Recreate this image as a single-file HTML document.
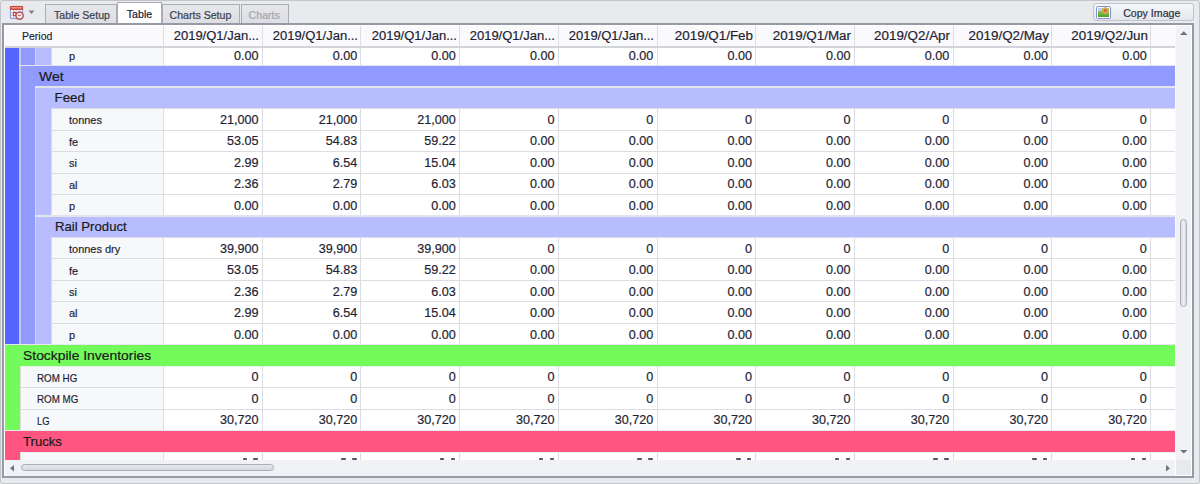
<!DOCTYPE html><html><head><meta charset="utf-8"><style>
*{box-sizing:border-box}
html,body{margin:0;padding:0;width:1200px;height:484px;overflow:hidden;background:#e9eaee;font-family:"Liberation Sans", sans-serif;position:relative}
.a{position:absolute}
.t{position:absolute;white-space:nowrap;line-height:normal;-webkit-text-stroke:0.20px currentColor}
</style></head><body>
<div class="a" style="left:0;top:0;width:1200px;height:484px;border:1px solid #c3c5cb;border-radius:3px"></div>
<svg class="a" style="left:9px;top:5px" width="17" height="17" viewBox="0 0 17 17">
<rect x="1.4" y="1.4" width="12.2" height="12.2" rx="0.8" fill="#fff" stroke="#7f95d6" stroke-width="1"/>
<rect x="0.9" y="0.9" width="13.2" height="4" rx="0.8" fill="#c8483e"/>
<rect x="1.9" y="2.1" width="11.2" height="1.4" fill="#f09a88"/>
<path d="M2 7.5h11M2 10h11M2 12.5h11M4.6 5v8M7.3 5v8M10 5v8" stroke="#9fb0e6" stroke-width="0.9" stroke-dasharray="1.1 1.1"/>
<path d="M4.3 7.4h2.6v3.4h-2.6z" fill="none" stroke="#e02828" stroke-width="1.1"/>
<circle cx="10.6" cy="10.6" r="3.6" fill="#eef4fa" stroke="#b84e4c" stroke-width="1.4"/>
<path d="M9 10.3l2 0.6 1-1.2" stroke="#c03838" stroke-width="0.9" fill="none"/>
</svg>
<svg class="a" style="left:28px;top:10px" width="8" height="5" viewBox="0 0 8 5"><path d="M0.5 0.5h6l-3 3.5z" fill="#7a7e88"/></svg>
<div class="a" style="left:45.0px;top:4.2px;width:72.2px;height:19.8px;background:linear-gradient(#e6e7eb,#dcdee3);border:1px solid #a9acb4;border-bottom:none"></div>
<div class="t" style="left:54.00px;top:8.81px;font-size:10.60px;color:#3a3e4c;transform:scaleX(1.000);transform-origin:0 0;">Table Setup</div>
<div class="a" style="left:161.6px;top:4.2px;width:78.9px;height:19.8px;background:linear-gradient(#e6e7eb,#dcdee3);border:1px solid #a9acb4;border-bottom:none"></div>
<div class="t" style="left:169.50px;top:8.81px;font-size:10.60px;color:#3a3e4c;transform:scaleX(1.000);transform-origin:0 0;">Charts Setup</div>
<div class="a" style="left:240.5px;top:4.2px;width:48.0px;height:19.8px;background:linear-gradient(#e6e7eb,#dcdee3);border:1px solid #a9acb4;border-bottom:none"></div>
<div class="t" style="left:248.60px;top:8.81px;font-size:10.60px;color:#a2a5b0;transform:scaleX(1.000);transform-origin:0 0;">Charts</div>
<div class="a" style="left:117.2px;top:2.2px;width:44.8px;height:21.8px;background:#ffffff;border:1px solid #a9acb4;border-bottom:none"></div>
<div class="t" style="left:126.80px;top:7.81px;font-size:10.60px;color:#1a1a3a;transform:scaleX(1.000);transform-origin:0 0;">Table</div>
<div class="a" style="left:1092.5px;top:3px;width:101px;height:18px;border:1px solid #c1c4cb;border-radius:3px;background:linear-gradient(#f6f7f9,#e4e6eb)"></div>
<svg class="a" style="left:1096px;top:6px" width="15" height="13" viewBox="0 0 15 13">
<defs><linearGradient id="gg" x1="0" y1="0" x2="0" y2="1"><stop offset="0" stop-color="#b6e070"/><stop offset="1" stop-color="#4c9e22"/></linearGradient></defs>
<rect x="0.5" y="0.5" width="14" height="12" rx="1.2" fill="#fff" stroke="#7d90d4" stroke-width="1"/>
<rect x="2" y="2" width="11" height="9" fill="url(#gg)"/>
<rect x="2" y="2" width="4" height="2.8" fill="#a8d8f2"/>
<circle cx="9.3" cy="4.6" r="3.4" fill="#e2a45a"/>
<circle cx="9.3" cy="4.6" r="1.5" fill="#c46e2e"/>
</svg>
<div class="t" style="left:1123.20px;top:7.31px;font-size:10.60px;color:#2a2e3c;transform:scaleX(1.000);transform-origin:0 0;">Copy Image</div>
<div class="a" style="left:2px;top:23px;width:1192px;height:455px;border:2px solid #959aa4;background:#fff"></div>
<div class="a" style="left:5.00px;top:26.00px;width:1169.80px;height:20.00px;background:#fafafc;"></div>
<div class="a" style="left:5.00px;top:46.00px;width:1169.80px;height:1.60px;background:#d3d4da;"></div>
<div class="t" style="left:21.80px;top:29.22px;font-size:11.80px;color:#1f1f33;transform:scaleX(0.890);transform-origin:0 0;">Period</div>
<div class="t" style="left:59.29px;top:28.99px;width:200px;text-align:right;font-size:12.50px;color:#1f1f33;transform:scaleX(1.040);transform-origin:100% 0;">2019/Q1/Jan...</div>
<div class="t" style="left:157.98px;top:28.99px;width:200px;text-align:right;font-size:12.50px;color:#1f1f33;transform:scaleX(1.040);transform-origin:100% 0;">2019/Q1/Jan...</div>
<div class="t" style="left:256.67px;top:28.99px;width:200px;text-align:right;font-size:12.50px;color:#1f1f33;transform:scaleX(1.040);transform-origin:100% 0;">2019/Q1/Jan...</div>
<div class="t" style="left:355.36px;top:28.99px;width:200px;text-align:right;font-size:12.50px;color:#1f1f33;transform:scaleX(1.040);transform-origin:100% 0;">2019/Q1/Jan...</div>
<div class="t" style="left:454.05px;top:28.99px;width:200px;text-align:right;font-size:12.50px;color:#1f1f33;transform:scaleX(1.040);transform-origin:100% 0;">2019/Q1/Jan...</div>
<div class="t" style="left:552.74px;top:28.99px;width:200px;text-align:right;font-size:12.50px;color:#1f1f33;transform:scaleX(1.071);transform-origin:100% 0;">2019/Q1/Feb</div>
<div class="t" style="left:651.43px;top:28.99px;width:200px;text-align:right;font-size:12.50px;color:#1f1f33;transform:scaleX(1.071);transform-origin:100% 0;">2019/Q1/Mar</div>
<div class="t" style="left:750.12px;top:28.99px;width:200px;text-align:right;font-size:12.50px;color:#1f1f33;transform:scaleX(1.071);transform-origin:100% 0;">2019/Q2/Apr</div>
<div class="t" style="left:848.81px;top:28.99px;width:200px;text-align:right;font-size:12.50px;color:#1f1f33;transform:scaleX(1.071);transform-origin:100% 0;">2019/Q2/May</div>
<div class="t" style="left:947.50px;top:28.99px;width:200px;text-align:right;font-size:12.50px;color:#1f1f33;transform:scaleX(1.071);transform-origin:100% 0;">2019/Q2/Jun</div>
<div class="a" style="left:163.10px;top:26.00px;width:1.00px;height:20.50px;background:#dcdde2;"></div>
<div class="a" style="left:261.79px;top:26.00px;width:1.00px;height:20.50px;background:#dcdde2;"></div>
<div class="a" style="left:360.48px;top:26.00px;width:1.00px;height:20.50px;background:#dcdde2;"></div>
<div class="a" style="left:459.17px;top:26.00px;width:1.00px;height:20.50px;background:#dcdde2;"></div>
<div class="a" style="left:557.86px;top:26.00px;width:1.00px;height:20.50px;background:#dcdde2;"></div>
<div class="a" style="left:656.55px;top:26.00px;width:1.00px;height:20.50px;background:#dcdde2;"></div>
<div class="a" style="left:755.24px;top:26.00px;width:1.00px;height:20.50px;background:#dcdde2;"></div>
<div class="a" style="left:853.93px;top:26.00px;width:1.00px;height:20.50px;background:#dcdde2;"></div>
<div class="a" style="left:952.62px;top:26.00px;width:1.00px;height:20.50px;background:#dcdde2;"></div>
<div class="a" style="left:1051.31px;top:26.00px;width:1.00px;height:20.50px;background:#dcdde2;"></div>
<div class="a" style="left:1150.00px;top:26.00px;width:1.00px;height:20.50px;background:#dcdde2;"></div>
<div class="a" style="left:0;top:47.6px;width:1174.8px;height:412px;overflow:hidden"><div class="a" style="left:0;top:-47.6px;width:1200px;height:484px">
<div class="a" style="left:5.00px;top:44.84px;width:14.20px;height:21.46px;background:#5566ff;"></div>
<div class="a" style="left:19.20px;top:44.84px;width:1.60px;height:21.46px;background:#c4c7ee;"></div>
<div class="a" style="left:20.80px;top:44.84px;width:14.20px;height:21.46px;background:#919bff;"></div>
<div class="a" style="left:35.00px;top:44.84px;width:1.00px;height:21.46px;background:#d0d3e2;"></div>
<div class="a" style="left:36.00px;top:44.84px;width:14.60px;height:21.46px;background:#b8bdff;"></div>
<div class="a" style="left:50.60px;top:44.84px;width:1.20px;height:21.46px;background:#dcdcde;"></div>
<div class="a" style="left:51.80px;top:44.84px;width:111.20px;height:21.46px;background:#f7f8fa;"></div>
<div class="a" style="left:50.60px;top:65.30px;width:1124.20px;height:1.00px;background:#dcdde2;"></div>
<div class="a" style="left:163.10px;top:44.84px;width:1.00px;height:21.46px;background:#dcdde2;"></div>
<div class="a" style="left:261.79px;top:44.84px;width:1.00px;height:21.46px;background:#dcdde2;"></div>
<div class="a" style="left:360.48px;top:44.84px;width:1.00px;height:21.46px;background:#dcdde2;"></div>
<div class="a" style="left:459.17px;top:44.84px;width:1.00px;height:21.46px;background:#dcdde2;"></div>
<div class="a" style="left:557.86px;top:44.84px;width:1.00px;height:21.46px;background:#dcdde2;"></div>
<div class="a" style="left:656.55px;top:44.84px;width:1.00px;height:21.46px;background:#dcdde2;"></div>
<div class="a" style="left:755.24px;top:44.84px;width:1.00px;height:21.46px;background:#dcdde2;"></div>
<div class="a" style="left:853.93px;top:44.84px;width:1.00px;height:21.46px;background:#dcdde2;"></div>
<div class="a" style="left:952.62px;top:44.84px;width:1.00px;height:21.46px;background:#dcdde2;"></div>
<div class="a" style="left:1051.31px;top:44.84px;width:1.00px;height:21.46px;background:#dcdde2;"></div>
<div class="a" style="left:1150.00px;top:44.84px;width:1.00px;height:21.46px;background:#dcdde2;"></div>
<div class="t" style="left:69.10px;top:48.96px;font-size:11.80px;color:#1f1f33;transform:scaleX(0.930);transform-origin:0 0;">p</div>
<div class="t" style="left:58.49px;top:48.54px;width:200px;text-align:right;font-size:12.60px;color:#1f1f33;transform:scaleX(1.000);transform-origin:100% 0;">0.00</div>
<div class="t" style="left:157.18px;top:48.54px;width:200px;text-align:right;font-size:12.60px;color:#1f1f33;transform:scaleX(1.000);transform-origin:100% 0;">0.00</div>
<div class="t" style="left:255.87px;top:48.54px;width:200px;text-align:right;font-size:12.60px;color:#1f1f33;transform:scaleX(1.000);transform-origin:100% 0;">0.00</div>
<div class="t" style="left:354.56px;top:48.54px;width:200px;text-align:right;font-size:12.60px;color:#1f1f33;transform:scaleX(1.000);transform-origin:100% 0;">0.00</div>
<div class="t" style="left:453.25px;top:48.54px;width:200px;text-align:right;font-size:12.60px;color:#1f1f33;transform:scaleX(1.000);transform-origin:100% 0;">0.00</div>
<div class="t" style="left:551.94px;top:48.54px;width:200px;text-align:right;font-size:12.60px;color:#1f1f33;transform:scaleX(1.000);transform-origin:100% 0;">0.00</div>
<div class="t" style="left:650.63px;top:48.54px;width:200px;text-align:right;font-size:12.60px;color:#1f1f33;transform:scaleX(1.000);transform-origin:100% 0;">0.00</div>
<div class="t" style="left:749.32px;top:48.54px;width:200px;text-align:right;font-size:12.60px;color:#1f1f33;transform:scaleX(1.000);transform-origin:100% 0;">0.00</div>
<div class="t" style="left:848.01px;top:48.54px;width:200px;text-align:right;font-size:12.60px;color:#1f1f33;transform:scaleX(1.000);transform-origin:100% 0;">0.00</div>
<div class="t" style="left:946.70px;top:48.54px;width:200px;text-align:right;font-size:12.60px;color:#1f1f33;transform:scaleX(1.000);transform-origin:100% 0;">0.00</div>
<div class="a" style="left:5.00px;top:66.30px;width:14.20px;height:21.46px;background:#5566ff;"></div>
<div class="a" style="left:19.20px;top:66.30px;width:1.60px;height:21.46px;background:#c4c7ee;"></div>
<div class="a" style="left:20.80px;top:66.30px;width:1154.00px;height:21.46px;background:#919bff;"></div>
<div class="a" style="left:35.00px;top:86.66px;width:1139.80px;height:1.10px;background:#dcdde2;"></div>
<div class="a" style="left:19.20px;top:65.00px;width:1155.60px;height:1.30px;background:#e4e5ea;"></div>
<div class="t" style="left:39.30px;top:68.86px;font-size:13.30px;color:#1a1a1a;transform:scaleX(1.050);transform-origin:0 0;">Wet</div>
<div class="a" style="left:5.00px;top:87.76px;width:14.20px;height:21.46px;background:#5566ff;"></div>
<div class="a" style="left:19.20px;top:87.76px;width:1.60px;height:21.46px;background:#c4c7ee;"></div>
<div class="a" style="left:20.80px;top:87.76px;width:14.20px;height:21.46px;background:#919bff;"></div>
<div class="a" style="left:35.00px;top:87.76px;width:1.00px;height:21.46px;background:#d0d3e2;"></div>
<div class="a" style="left:36.00px;top:87.76px;width:1138.80px;height:21.46px;background:#b8bdff;"></div>
<div class="a" style="left:50.60px;top:108.12px;width:1124.20px;height:1.10px;background:#dcdde4;"></div>
<div class="a" style="left:35.00px;top:86.46px;width:1139.80px;height:1.30px;background:#e4e5ea;"></div>
<div class="t" style="left:54.60px;top:90.32px;font-size:13.30px;color:#1a1a1a;transform:scaleX(1.000);transform-origin:0 0;">Feed</div>
<div class="a" style="left:5.00px;top:109.22px;width:14.20px;height:21.46px;background:#5566ff;"></div>
<div class="a" style="left:19.20px;top:109.22px;width:1.60px;height:21.46px;background:#c4c7ee;"></div>
<div class="a" style="left:20.80px;top:109.22px;width:14.20px;height:21.46px;background:#919bff;"></div>
<div class="a" style="left:35.00px;top:109.22px;width:1.00px;height:21.46px;background:#d0d3e2;"></div>
<div class="a" style="left:36.00px;top:109.22px;width:14.60px;height:21.46px;background:#b8bdff;"></div>
<div class="a" style="left:50.60px;top:109.22px;width:1.20px;height:21.46px;background:#dcdcde;"></div>
<div class="a" style="left:51.80px;top:109.22px;width:111.20px;height:21.46px;background:#f7f8fa;"></div>
<div class="a" style="left:50.60px;top:129.68px;width:1124.20px;height:1.00px;background:#dcdde2;"></div>
<div class="a" style="left:163.10px;top:109.22px;width:1.00px;height:21.46px;background:#dcdde2;"></div>
<div class="a" style="left:261.79px;top:109.22px;width:1.00px;height:21.46px;background:#dcdde2;"></div>
<div class="a" style="left:360.48px;top:109.22px;width:1.00px;height:21.46px;background:#dcdde2;"></div>
<div class="a" style="left:459.17px;top:109.22px;width:1.00px;height:21.46px;background:#dcdde2;"></div>
<div class="a" style="left:557.86px;top:109.22px;width:1.00px;height:21.46px;background:#dcdde2;"></div>
<div class="a" style="left:656.55px;top:109.22px;width:1.00px;height:21.46px;background:#dcdde2;"></div>
<div class="a" style="left:755.24px;top:109.22px;width:1.00px;height:21.46px;background:#dcdde2;"></div>
<div class="a" style="left:853.93px;top:109.22px;width:1.00px;height:21.46px;background:#dcdde2;"></div>
<div class="a" style="left:952.62px;top:109.22px;width:1.00px;height:21.46px;background:#dcdde2;"></div>
<div class="a" style="left:1051.31px;top:109.22px;width:1.00px;height:21.46px;background:#dcdde2;"></div>
<div class="a" style="left:1150.00px;top:109.22px;width:1.00px;height:21.46px;background:#dcdde2;"></div>
<div class="t" style="left:69.10px;top:113.34px;font-size:11.80px;color:#1f1f33;transform:scaleX(0.930);transform-origin:0 0;">tonnes</div>
<div class="t" style="left:58.49px;top:112.92px;width:200px;text-align:right;font-size:12.60px;color:#1f1f33;transform:scaleX(1.000);transform-origin:100% 0;">21,000</div>
<div class="t" style="left:157.18px;top:112.92px;width:200px;text-align:right;font-size:12.60px;color:#1f1f33;transform:scaleX(1.000);transform-origin:100% 0;">21,000</div>
<div class="t" style="left:255.87px;top:112.92px;width:200px;text-align:right;font-size:12.60px;color:#1f1f33;transform:scaleX(1.000);transform-origin:100% 0;">21,000</div>
<div class="t" style="left:354.56px;top:112.92px;width:200px;text-align:right;font-size:12.60px;color:#1f1f33;transform:scaleX(1.000);transform-origin:100% 0;">0</div>
<div class="t" style="left:453.25px;top:112.92px;width:200px;text-align:right;font-size:12.60px;color:#1f1f33;transform:scaleX(1.000);transform-origin:100% 0;">0</div>
<div class="t" style="left:551.94px;top:112.92px;width:200px;text-align:right;font-size:12.60px;color:#1f1f33;transform:scaleX(1.000);transform-origin:100% 0;">0</div>
<div class="t" style="left:650.63px;top:112.92px;width:200px;text-align:right;font-size:12.60px;color:#1f1f33;transform:scaleX(1.000);transform-origin:100% 0;">0</div>
<div class="t" style="left:749.32px;top:112.92px;width:200px;text-align:right;font-size:12.60px;color:#1f1f33;transform:scaleX(1.000);transform-origin:100% 0;">0</div>
<div class="t" style="left:848.01px;top:112.92px;width:200px;text-align:right;font-size:12.60px;color:#1f1f33;transform:scaleX(1.000);transform-origin:100% 0;">0</div>
<div class="t" style="left:946.70px;top:112.92px;width:200px;text-align:right;font-size:12.60px;color:#1f1f33;transform:scaleX(1.000);transform-origin:100% 0;">0</div>
<div class="a" style="left:5.00px;top:130.68px;width:14.20px;height:21.46px;background:#5566ff;"></div>
<div class="a" style="left:19.20px;top:130.68px;width:1.60px;height:21.46px;background:#c4c7ee;"></div>
<div class="a" style="left:20.80px;top:130.68px;width:14.20px;height:21.46px;background:#919bff;"></div>
<div class="a" style="left:35.00px;top:130.68px;width:1.00px;height:21.46px;background:#d0d3e2;"></div>
<div class="a" style="left:36.00px;top:130.68px;width:14.60px;height:21.46px;background:#b8bdff;"></div>
<div class="a" style="left:50.60px;top:130.68px;width:1.20px;height:21.46px;background:#dcdcde;"></div>
<div class="a" style="left:51.80px;top:130.68px;width:111.20px;height:21.46px;background:#f7f8fa;"></div>
<div class="a" style="left:50.60px;top:151.14px;width:1124.20px;height:1.00px;background:#dcdde2;"></div>
<div class="a" style="left:163.10px;top:130.68px;width:1.00px;height:21.46px;background:#dcdde2;"></div>
<div class="a" style="left:261.79px;top:130.68px;width:1.00px;height:21.46px;background:#dcdde2;"></div>
<div class="a" style="left:360.48px;top:130.68px;width:1.00px;height:21.46px;background:#dcdde2;"></div>
<div class="a" style="left:459.17px;top:130.68px;width:1.00px;height:21.46px;background:#dcdde2;"></div>
<div class="a" style="left:557.86px;top:130.68px;width:1.00px;height:21.46px;background:#dcdde2;"></div>
<div class="a" style="left:656.55px;top:130.68px;width:1.00px;height:21.46px;background:#dcdde2;"></div>
<div class="a" style="left:755.24px;top:130.68px;width:1.00px;height:21.46px;background:#dcdde2;"></div>
<div class="a" style="left:853.93px;top:130.68px;width:1.00px;height:21.46px;background:#dcdde2;"></div>
<div class="a" style="left:952.62px;top:130.68px;width:1.00px;height:21.46px;background:#dcdde2;"></div>
<div class="a" style="left:1051.31px;top:130.68px;width:1.00px;height:21.46px;background:#dcdde2;"></div>
<div class="a" style="left:1150.00px;top:130.68px;width:1.00px;height:21.46px;background:#dcdde2;"></div>
<div class="t" style="left:69.10px;top:134.80px;font-size:11.80px;color:#1f1f33;transform:scaleX(0.930);transform-origin:0 0;">fe</div>
<div class="t" style="left:58.49px;top:134.38px;width:200px;text-align:right;font-size:12.60px;color:#1f1f33;transform:scaleX(1.000);transform-origin:100% 0;">53.05</div>
<div class="t" style="left:157.18px;top:134.38px;width:200px;text-align:right;font-size:12.60px;color:#1f1f33;transform:scaleX(1.000);transform-origin:100% 0;">54.83</div>
<div class="t" style="left:255.87px;top:134.38px;width:200px;text-align:right;font-size:12.60px;color:#1f1f33;transform:scaleX(1.000);transform-origin:100% 0;">59.22</div>
<div class="t" style="left:354.56px;top:134.38px;width:200px;text-align:right;font-size:12.60px;color:#1f1f33;transform:scaleX(1.000);transform-origin:100% 0;">0.00</div>
<div class="t" style="left:453.25px;top:134.38px;width:200px;text-align:right;font-size:12.60px;color:#1f1f33;transform:scaleX(1.000);transform-origin:100% 0;">0.00</div>
<div class="t" style="left:551.94px;top:134.38px;width:200px;text-align:right;font-size:12.60px;color:#1f1f33;transform:scaleX(1.000);transform-origin:100% 0;">0.00</div>
<div class="t" style="left:650.63px;top:134.38px;width:200px;text-align:right;font-size:12.60px;color:#1f1f33;transform:scaleX(1.000);transform-origin:100% 0;">0.00</div>
<div class="t" style="left:749.32px;top:134.38px;width:200px;text-align:right;font-size:12.60px;color:#1f1f33;transform:scaleX(1.000);transform-origin:100% 0;">0.00</div>
<div class="t" style="left:848.01px;top:134.38px;width:200px;text-align:right;font-size:12.60px;color:#1f1f33;transform:scaleX(1.000);transform-origin:100% 0;">0.00</div>
<div class="t" style="left:946.70px;top:134.38px;width:200px;text-align:right;font-size:12.60px;color:#1f1f33;transform:scaleX(1.000);transform-origin:100% 0;">0.00</div>
<div class="a" style="left:5.00px;top:152.14px;width:14.20px;height:21.46px;background:#5566ff;"></div>
<div class="a" style="left:19.20px;top:152.14px;width:1.60px;height:21.46px;background:#c4c7ee;"></div>
<div class="a" style="left:20.80px;top:152.14px;width:14.20px;height:21.46px;background:#919bff;"></div>
<div class="a" style="left:35.00px;top:152.14px;width:1.00px;height:21.46px;background:#d0d3e2;"></div>
<div class="a" style="left:36.00px;top:152.14px;width:14.60px;height:21.46px;background:#b8bdff;"></div>
<div class="a" style="left:50.60px;top:152.14px;width:1.20px;height:21.46px;background:#dcdcde;"></div>
<div class="a" style="left:51.80px;top:152.14px;width:111.20px;height:21.46px;background:#f7f8fa;"></div>
<div class="a" style="left:50.60px;top:172.60px;width:1124.20px;height:1.00px;background:#dcdde2;"></div>
<div class="a" style="left:163.10px;top:152.14px;width:1.00px;height:21.46px;background:#dcdde2;"></div>
<div class="a" style="left:261.79px;top:152.14px;width:1.00px;height:21.46px;background:#dcdde2;"></div>
<div class="a" style="left:360.48px;top:152.14px;width:1.00px;height:21.46px;background:#dcdde2;"></div>
<div class="a" style="left:459.17px;top:152.14px;width:1.00px;height:21.46px;background:#dcdde2;"></div>
<div class="a" style="left:557.86px;top:152.14px;width:1.00px;height:21.46px;background:#dcdde2;"></div>
<div class="a" style="left:656.55px;top:152.14px;width:1.00px;height:21.46px;background:#dcdde2;"></div>
<div class="a" style="left:755.24px;top:152.14px;width:1.00px;height:21.46px;background:#dcdde2;"></div>
<div class="a" style="left:853.93px;top:152.14px;width:1.00px;height:21.46px;background:#dcdde2;"></div>
<div class="a" style="left:952.62px;top:152.14px;width:1.00px;height:21.46px;background:#dcdde2;"></div>
<div class="a" style="left:1051.31px;top:152.14px;width:1.00px;height:21.46px;background:#dcdde2;"></div>
<div class="a" style="left:1150.00px;top:152.14px;width:1.00px;height:21.46px;background:#dcdde2;"></div>
<div class="t" style="left:69.10px;top:156.26px;font-size:11.80px;color:#1f1f33;transform:scaleX(0.930);transform-origin:0 0;">si</div>
<div class="t" style="left:58.49px;top:155.84px;width:200px;text-align:right;font-size:12.60px;color:#1f1f33;transform:scaleX(1.000);transform-origin:100% 0;">2.99</div>
<div class="t" style="left:157.18px;top:155.84px;width:200px;text-align:right;font-size:12.60px;color:#1f1f33;transform:scaleX(1.000);transform-origin:100% 0;">6.54</div>
<div class="t" style="left:255.87px;top:155.84px;width:200px;text-align:right;font-size:12.60px;color:#1f1f33;transform:scaleX(1.000);transform-origin:100% 0;">15.04</div>
<div class="t" style="left:354.56px;top:155.84px;width:200px;text-align:right;font-size:12.60px;color:#1f1f33;transform:scaleX(1.000);transform-origin:100% 0;">0.00</div>
<div class="t" style="left:453.25px;top:155.84px;width:200px;text-align:right;font-size:12.60px;color:#1f1f33;transform:scaleX(1.000);transform-origin:100% 0;">0.00</div>
<div class="t" style="left:551.94px;top:155.84px;width:200px;text-align:right;font-size:12.60px;color:#1f1f33;transform:scaleX(1.000);transform-origin:100% 0;">0.00</div>
<div class="t" style="left:650.63px;top:155.84px;width:200px;text-align:right;font-size:12.60px;color:#1f1f33;transform:scaleX(1.000);transform-origin:100% 0;">0.00</div>
<div class="t" style="left:749.32px;top:155.84px;width:200px;text-align:right;font-size:12.60px;color:#1f1f33;transform:scaleX(1.000);transform-origin:100% 0;">0.00</div>
<div class="t" style="left:848.01px;top:155.84px;width:200px;text-align:right;font-size:12.60px;color:#1f1f33;transform:scaleX(1.000);transform-origin:100% 0;">0.00</div>
<div class="t" style="left:946.70px;top:155.84px;width:200px;text-align:right;font-size:12.60px;color:#1f1f33;transform:scaleX(1.000);transform-origin:100% 0;">0.00</div>
<div class="a" style="left:5.00px;top:173.60px;width:14.20px;height:21.46px;background:#5566ff;"></div>
<div class="a" style="left:19.20px;top:173.60px;width:1.60px;height:21.46px;background:#c4c7ee;"></div>
<div class="a" style="left:20.80px;top:173.60px;width:14.20px;height:21.46px;background:#919bff;"></div>
<div class="a" style="left:35.00px;top:173.60px;width:1.00px;height:21.46px;background:#d0d3e2;"></div>
<div class="a" style="left:36.00px;top:173.60px;width:14.60px;height:21.46px;background:#b8bdff;"></div>
<div class="a" style="left:50.60px;top:173.60px;width:1.20px;height:21.46px;background:#dcdcde;"></div>
<div class="a" style="left:51.80px;top:173.60px;width:111.20px;height:21.46px;background:#f7f8fa;"></div>
<div class="a" style="left:50.60px;top:194.06px;width:1124.20px;height:1.00px;background:#dcdde2;"></div>
<div class="a" style="left:163.10px;top:173.60px;width:1.00px;height:21.46px;background:#dcdde2;"></div>
<div class="a" style="left:261.79px;top:173.60px;width:1.00px;height:21.46px;background:#dcdde2;"></div>
<div class="a" style="left:360.48px;top:173.60px;width:1.00px;height:21.46px;background:#dcdde2;"></div>
<div class="a" style="left:459.17px;top:173.60px;width:1.00px;height:21.46px;background:#dcdde2;"></div>
<div class="a" style="left:557.86px;top:173.60px;width:1.00px;height:21.46px;background:#dcdde2;"></div>
<div class="a" style="left:656.55px;top:173.60px;width:1.00px;height:21.46px;background:#dcdde2;"></div>
<div class="a" style="left:755.24px;top:173.60px;width:1.00px;height:21.46px;background:#dcdde2;"></div>
<div class="a" style="left:853.93px;top:173.60px;width:1.00px;height:21.46px;background:#dcdde2;"></div>
<div class="a" style="left:952.62px;top:173.60px;width:1.00px;height:21.46px;background:#dcdde2;"></div>
<div class="a" style="left:1051.31px;top:173.60px;width:1.00px;height:21.46px;background:#dcdde2;"></div>
<div class="a" style="left:1150.00px;top:173.60px;width:1.00px;height:21.46px;background:#dcdde2;"></div>
<div class="t" style="left:69.10px;top:177.72px;font-size:11.80px;color:#1f1f33;transform:scaleX(0.930);transform-origin:0 0;">al</div>
<div class="t" style="left:58.49px;top:177.30px;width:200px;text-align:right;font-size:12.60px;color:#1f1f33;transform:scaleX(1.000);transform-origin:100% 0;">2.36</div>
<div class="t" style="left:157.18px;top:177.30px;width:200px;text-align:right;font-size:12.60px;color:#1f1f33;transform:scaleX(1.000);transform-origin:100% 0;">2.79</div>
<div class="t" style="left:255.87px;top:177.30px;width:200px;text-align:right;font-size:12.60px;color:#1f1f33;transform:scaleX(1.000);transform-origin:100% 0;">6.03</div>
<div class="t" style="left:354.56px;top:177.30px;width:200px;text-align:right;font-size:12.60px;color:#1f1f33;transform:scaleX(1.000);transform-origin:100% 0;">0.00</div>
<div class="t" style="left:453.25px;top:177.30px;width:200px;text-align:right;font-size:12.60px;color:#1f1f33;transform:scaleX(1.000);transform-origin:100% 0;">0.00</div>
<div class="t" style="left:551.94px;top:177.30px;width:200px;text-align:right;font-size:12.60px;color:#1f1f33;transform:scaleX(1.000);transform-origin:100% 0;">0.00</div>
<div class="t" style="left:650.63px;top:177.30px;width:200px;text-align:right;font-size:12.60px;color:#1f1f33;transform:scaleX(1.000);transform-origin:100% 0;">0.00</div>
<div class="t" style="left:749.32px;top:177.30px;width:200px;text-align:right;font-size:12.60px;color:#1f1f33;transform:scaleX(1.000);transform-origin:100% 0;">0.00</div>
<div class="t" style="left:848.01px;top:177.30px;width:200px;text-align:right;font-size:12.60px;color:#1f1f33;transform:scaleX(1.000);transform-origin:100% 0;">0.00</div>
<div class="t" style="left:946.70px;top:177.30px;width:200px;text-align:right;font-size:12.60px;color:#1f1f33;transform:scaleX(1.000);transform-origin:100% 0;">0.00</div>
<div class="a" style="left:5.00px;top:195.06px;width:14.20px;height:21.46px;background:#5566ff;"></div>
<div class="a" style="left:19.20px;top:195.06px;width:1.60px;height:21.46px;background:#c4c7ee;"></div>
<div class="a" style="left:20.80px;top:195.06px;width:14.20px;height:21.46px;background:#919bff;"></div>
<div class="a" style="left:35.00px;top:195.06px;width:1.00px;height:21.46px;background:#d0d3e2;"></div>
<div class="a" style="left:36.00px;top:195.06px;width:14.60px;height:21.46px;background:#b8bdff;"></div>
<div class="a" style="left:50.60px;top:195.06px;width:1.20px;height:21.46px;background:#dcdcde;"></div>
<div class="a" style="left:51.80px;top:195.06px;width:111.20px;height:21.46px;background:#f7f8fa;"></div>
<div class="a" style="left:50.60px;top:215.52px;width:1124.20px;height:1.00px;background:#dcdde2;"></div>
<div class="a" style="left:163.10px;top:195.06px;width:1.00px;height:21.46px;background:#dcdde2;"></div>
<div class="a" style="left:261.79px;top:195.06px;width:1.00px;height:21.46px;background:#dcdde2;"></div>
<div class="a" style="left:360.48px;top:195.06px;width:1.00px;height:21.46px;background:#dcdde2;"></div>
<div class="a" style="left:459.17px;top:195.06px;width:1.00px;height:21.46px;background:#dcdde2;"></div>
<div class="a" style="left:557.86px;top:195.06px;width:1.00px;height:21.46px;background:#dcdde2;"></div>
<div class="a" style="left:656.55px;top:195.06px;width:1.00px;height:21.46px;background:#dcdde2;"></div>
<div class="a" style="left:755.24px;top:195.06px;width:1.00px;height:21.46px;background:#dcdde2;"></div>
<div class="a" style="left:853.93px;top:195.06px;width:1.00px;height:21.46px;background:#dcdde2;"></div>
<div class="a" style="left:952.62px;top:195.06px;width:1.00px;height:21.46px;background:#dcdde2;"></div>
<div class="a" style="left:1051.31px;top:195.06px;width:1.00px;height:21.46px;background:#dcdde2;"></div>
<div class="a" style="left:1150.00px;top:195.06px;width:1.00px;height:21.46px;background:#dcdde2;"></div>
<div class="t" style="left:69.10px;top:199.18px;font-size:11.80px;color:#1f1f33;transform:scaleX(0.930);transform-origin:0 0;">p</div>
<div class="t" style="left:58.49px;top:198.76px;width:200px;text-align:right;font-size:12.60px;color:#1f1f33;transform:scaleX(1.000);transform-origin:100% 0;">0.00</div>
<div class="t" style="left:157.18px;top:198.76px;width:200px;text-align:right;font-size:12.60px;color:#1f1f33;transform:scaleX(1.000);transform-origin:100% 0;">0.00</div>
<div class="t" style="left:255.87px;top:198.76px;width:200px;text-align:right;font-size:12.60px;color:#1f1f33;transform:scaleX(1.000);transform-origin:100% 0;">0.00</div>
<div class="t" style="left:354.56px;top:198.76px;width:200px;text-align:right;font-size:12.60px;color:#1f1f33;transform:scaleX(1.000);transform-origin:100% 0;">0.00</div>
<div class="t" style="left:453.25px;top:198.76px;width:200px;text-align:right;font-size:12.60px;color:#1f1f33;transform:scaleX(1.000);transform-origin:100% 0;">0.00</div>
<div class="t" style="left:551.94px;top:198.76px;width:200px;text-align:right;font-size:12.60px;color:#1f1f33;transform:scaleX(1.000);transform-origin:100% 0;">0.00</div>
<div class="t" style="left:650.63px;top:198.76px;width:200px;text-align:right;font-size:12.60px;color:#1f1f33;transform:scaleX(1.000);transform-origin:100% 0;">0.00</div>
<div class="t" style="left:749.32px;top:198.76px;width:200px;text-align:right;font-size:12.60px;color:#1f1f33;transform:scaleX(1.000);transform-origin:100% 0;">0.00</div>
<div class="t" style="left:848.01px;top:198.76px;width:200px;text-align:right;font-size:12.60px;color:#1f1f33;transform:scaleX(1.000);transform-origin:100% 0;">0.00</div>
<div class="t" style="left:946.70px;top:198.76px;width:200px;text-align:right;font-size:12.60px;color:#1f1f33;transform:scaleX(1.000);transform-origin:100% 0;">0.00</div>
<div class="a" style="left:5.00px;top:216.52px;width:14.20px;height:21.46px;background:#5566ff;"></div>
<div class="a" style="left:19.20px;top:216.52px;width:1.60px;height:21.46px;background:#c4c7ee;"></div>
<div class="a" style="left:20.80px;top:216.52px;width:14.20px;height:21.46px;background:#919bff;"></div>
<div class="a" style="left:35.00px;top:216.52px;width:1.00px;height:21.46px;background:#d0d3e2;"></div>
<div class="a" style="left:36.00px;top:216.52px;width:1138.80px;height:21.46px;background:#b8bdff;"></div>
<div class="a" style="left:50.60px;top:236.88px;width:1124.20px;height:1.10px;background:#dcdde4;"></div>
<div class="a" style="left:35.00px;top:215.22px;width:1139.80px;height:1.30px;background:#e4e5ea;"></div>
<div class="t" style="left:54.60px;top:219.08px;font-size:13.30px;color:#1a1a1a;transform:scaleX(0.990);transform-origin:0 0;">Rail Product</div>
<div class="a" style="left:5.00px;top:237.98px;width:14.20px;height:21.46px;background:#5566ff;"></div>
<div class="a" style="left:19.20px;top:237.98px;width:1.60px;height:21.46px;background:#c4c7ee;"></div>
<div class="a" style="left:20.80px;top:237.98px;width:14.20px;height:21.46px;background:#919bff;"></div>
<div class="a" style="left:35.00px;top:237.98px;width:1.00px;height:21.46px;background:#d0d3e2;"></div>
<div class="a" style="left:36.00px;top:237.98px;width:14.60px;height:21.46px;background:#b8bdff;"></div>
<div class="a" style="left:50.60px;top:237.98px;width:1.20px;height:21.46px;background:#dcdcde;"></div>
<div class="a" style="left:51.80px;top:237.98px;width:111.20px;height:21.46px;background:#f7f8fa;"></div>
<div class="a" style="left:50.60px;top:258.44px;width:1124.20px;height:1.00px;background:#dcdde2;"></div>
<div class="a" style="left:163.10px;top:237.98px;width:1.00px;height:21.46px;background:#dcdde2;"></div>
<div class="a" style="left:261.79px;top:237.98px;width:1.00px;height:21.46px;background:#dcdde2;"></div>
<div class="a" style="left:360.48px;top:237.98px;width:1.00px;height:21.46px;background:#dcdde2;"></div>
<div class="a" style="left:459.17px;top:237.98px;width:1.00px;height:21.46px;background:#dcdde2;"></div>
<div class="a" style="left:557.86px;top:237.98px;width:1.00px;height:21.46px;background:#dcdde2;"></div>
<div class="a" style="left:656.55px;top:237.98px;width:1.00px;height:21.46px;background:#dcdde2;"></div>
<div class="a" style="left:755.24px;top:237.98px;width:1.00px;height:21.46px;background:#dcdde2;"></div>
<div class="a" style="left:853.93px;top:237.98px;width:1.00px;height:21.46px;background:#dcdde2;"></div>
<div class="a" style="left:952.62px;top:237.98px;width:1.00px;height:21.46px;background:#dcdde2;"></div>
<div class="a" style="left:1051.31px;top:237.98px;width:1.00px;height:21.46px;background:#dcdde2;"></div>
<div class="a" style="left:1150.00px;top:237.98px;width:1.00px;height:21.46px;background:#dcdde2;"></div>
<div class="t" style="left:69.10px;top:242.10px;font-size:11.80px;color:#1f1f33;transform:scaleX(0.930);transform-origin:0 0;">tonnes dry</div>
<div class="t" style="left:58.49px;top:241.68px;width:200px;text-align:right;font-size:12.60px;color:#1f1f33;transform:scaleX(1.000);transform-origin:100% 0;">39,900</div>
<div class="t" style="left:157.18px;top:241.68px;width:200px;text-align:right;font-size:12.60px;color:#1f1f33;transform:scaleX(1.000);transform-origin:100% 0;">39,900</div>
<div class="t" style="left:255.87px;top:241.68px;width:200px;text-align:right;font-size:12.60px;color:#1f1f33;transform:scaleX(1.000);transform-origin:100% 0;">39,900</div>
<div class="t" style="left:354.56px;top:241.68px;width:200px;text-align:right;font-size:12.60px;color:#1f1f33;transform:scaleX(1.000);transform-origin:100% 0;">0</div>
<div class="t" style="left:453.25px;top:241.68px;width:200px;text-align:right;font-size:12.60px;color:#1f1f33;transform:scaleX(1.000);transform-origin:100% 0;">0</div>
<div class="t" style="left:551.94px;top:241.68px;width:200px;text-align:right;font-size:12.60px;color:#1f1f33;transform:scaleX(1.000);transform-origin:100% 0;">0</div>
<div class="t" style="left:650.63px;top:241.68px;width:200px;text-align:right;font-size:12.60px;color:#1f1f33;transform:scaleX(1.000);transform-origin:100% 0;">0</div>
<div class="t" style="left:749.32px;top:241.68px;width:200px;text-align:right;font-size:12.60px;color:#1f1f33;transform:scaleX(1.000);transform-origin:100% 0;">0</div>
<div class="t" style="left:848.01px;top:241.68px;width:200px;text-align:right;font-size:12.60px;color:#1f1f33;transform:scaleX(1.000);transform-origin:100% 0;">0</div>
<div class="t" style="left:946.70px;top:241.68px;width:200px;text-align:right;font-size:12.60px;color:#1f1f33;transform:scaleX(1.000);transform-origin:100% 0;">0</div>
<div class="a" style="left:5.00px;top:259.44px;width:14.20px;height:21.46px;background:#5566ff;"></div>
<div class="a" style="left:19.20px;top:259.44px;width:1.60px;height:21.46px;background:#c4c7ee;"></div>
<div class="a" style="left:20.80px;top:259.44px;width:14.20px;height:21.46px;background:#919bff;"></div>
<div class="a" style="left:35.00px;top:259.44px;width:1.00px;height:21.46px;background:#d0d3e2;"></div>
<div class="a" style="left:36.00px;top:259.44px;width:14.60px;height:21.46px;background:#b8bdff;"></div>
<div class="a" style="left:50.60px;top:259.44px;width:1.20px;height:21.46px;background:#dcdcde;"></div>
<div class="a" style="left:51.80px;top:259.44px;width:111.20px;height:21.46px;background:#f7f8fa;"></div>
<div class="a" style="left:50.60px;top:279.90px;width:1124.20px;height:1.00px;background:#dcdde2;"></div>
<div class="a" style="left:163.10px;top:259.44px;width:1.00px;height:21.46px;background:#dcdde2;"></div>
<div class="a" style="left:261.79px;top:259.44px;width:1.00px;height:21.46px;background:#dcdde2;"></div>
<div class="a" style="left:360.48px;top:259.44px;width:1.00px;height:21.46px;background:#dcdde2;"></div>
<div class="a" style="left:459.17px;top:259.44px;width:1.00px;height:21.46px;background:#dcdde2;"></div>
<div class="a" style="left:557.86px;top:259.44px;width:1.00px;height:21.46px;background:#dcdde2;"></div>
<div class="a" style="left:656.55px;top:259.44px;width:1.00px;height:21.46px;background:#dcdde2;"></div>
<div class="a" style="left:755.24px;top:259.44px;width:1.00px;height:21.46px;background:#dcdde2;"></div>
<div class="a" style="left:853.93px;top:259.44px;width:1.00px;height:21.46px;background:#dcdde2;"></div>
<div class="a" style="left:952.62px;top:259.44px;width:1.00px;height:21.46px;background:#dcdde2;"></div>
<div class="a" style="left:1051.31px;top:259.44px;width:1.00px;height:21.46px;background:#dcdde2;"></div>
<div class="a" style="left:1150.00px;top:259.44px;width:1.00px;height:21.46px;background:#dcdde2;"></div>
<div class="t" style="left:69.10px;top:263.56px;font-size:11.80px;color:#1f1f33;transform:scaleX(0.930);transform-origin:0 0;">fe</div>
<div class="t" style="left:58.49px;top:263.14px;width:200px;text-align:right;font-size:12.60px;color:#1f1f33;transform:scaleX(1.000);transform-origin:100% 0;">53.05</div>
<div class="t" style="left:157.18px;top:263.14px;width:200px;text-align:right;font-size:12.60px;color:#1f1f33;transform:scaleX(1.000);transform-origin:100% 0;">54.83</div>
<div class="t" style="left:255.87px;top:263.14px;width:200px;text-align:right;font-size:12.60px;color:#1f1f33;transform:scaleX(1.000);transform-origin:100% 0;">59.22</div>
<div class="t" style="left:354.56px;top:263.14px;width:200px;text-align:right;font-size:12.60px;color:#1f1f33;transform:scaleX(1.000);transform-origin:100% 0;">0.00</div>
<div class="t" style="left:453.25px;top:263.14px;width:200px;text-align:right;font-size:12.60px;color:#1f1f33;transform:scaleX(1.000);transform-origin:100% 0;">0.00</div>
<div class="t" style="left:551.94px;top:263.14px;width:200px;text-align:right;font-size:12.60px;color:#1f1f33;transform:scaleX(1.000);transform-origin:100% 0;">0.00</div>
<div class="t" style="left:650.63px;top:263.14px;width:200px;text-align:right;font-size:12.60px;color:#1f1f33;transform:scaleX(1.000);transform-origin:100% 0;">0.00</div>
<div class="t" style="left:749.32px;top:263.14px;width:200px;text-align:right;font-size:12.60px;color:#1f1f33;transform:scaleX(1.000);transform-origin:100% 0;">0.00</div>
<div class="t" style="left:848.01px;top:263.14px;width:200px;text-align:right;font-size:12.60px;color:#1f1f33;transform:scaleX(1.000);transform-origin:100% 0;">0.00</div>
<div class="t" style="left:946.70px;top:263.14px;width:200px;text-align:right;font-size:12.60px;color:#1f1f33;transform:scaleX(1.000);transform-origin:100% 0;">0.00</div>
<div class="a" style="left:5.00px;top:280.90px;width:14.20px;height:21.46px;background:#5566ff;"></div>
<div class="a" style="left:19.20px;top:280.90px;width:1.60px;height:21.46px;background:#c4c7ee;"></div>
<div class="a" style="left:20.80px;top:280.90px;width:14.20px;height:21.46px;background:#919bff;"></div>
<div class="a" style="left:35.00px;top:280.90px;width:1.00px;height:21.46px;background:#d0d3e2;"></div>
<div class="a" style="left:36.00px;top:280.90px;width:14.60px;height:21.46px;background:#b8bdff;"></div>
<div class="a" style="left:50.60px;top:280.90px;width:1.20px;height:21.46px;background:#dcdcde;"></div>
<div class="a" style="left:51.80px;top:280.90px;width:111.20px;height:21.46px;background:#f7f8fa;"></div>
<div class="a" style="left:50.60px;top:301.36px;width:1124.20px;height:1.00px;background:#dcdde2;"></div>
<div class="a" style="left:163.10px;top:280.90px;width:1.00px;height:21.46px;background:#dcdde2;"></div>
<div class="a" style="left:261.79px;top:280.90px;width:1.00px;height:21.46px;background:#dcdde2;"></div>
<div class="a" style="left:360.48px;top:280.90px;width:1.00px;height:21.46px;background:#dcdde2;"></div>
<div class="a" style="left:459.17px;top:280.90px;width:1.00px;height:21.46px;background:#dcdde2;"></div>
<div class="a" style="left:557.86px;top:280.90px;width:1.00px;height:21.46px;background:#dcdde2;"></div>
<div class="a" style="left:656.55px;top:280.90px;width:1.00px;height:21.46px;background:#dcdde2;"></div>
<div class="a" style="left:755.24px;top:280.90px;width:1.00px;height:21.46px;background:#dcdde2;"></div>
<div class="a" style="left:853.93px;top:280.90px;width:1.00px;height:21.46px;background:#dcdde2;"></div>
<div class="a" style="left:952.62px;top:280.90px;width:1.00px;height:21.46px;background:#dcdde2;"></div>
<div class="a" style="left:1051.31px;top:280.90px;width:1.00px;height:21.46px;background:#dcdde2;"></div>
<div class="a" style="left:1150.00px;top:280.90px;width:1.00px;height:21.46px;background:#dcdde2;"></div>
<div class="t" style="left:69.10px;top:285.02px;font-size:11.80px;color:#1f1f33;transform:scaleX(0.930);transform-origin:0 0;">si</div>
<div class="t" style="left:58.49px;top:284.60px;width:200px;text-align:right;font-size:12.60px;color:#1f1f33;transform:scaleX(1.000);transform-origin:100% 0;">2.36</div>
<div class="t" style="left:157.18px;top:284.60px;width:200px;text-align:right;font-size:12.60px;color:#1f1f33;transform:scaleX(1.000);transform-origin:100% 0;">2.79</div>
<div class="t" style="left:255.87px;top:284.60px;width:200px;text-align:right;font-size:12.60px;color:#1f1f33;transform:scaleX(1.000);transform-origin:100% 0;">6.03</div>
<div class="t" style="left:354.56px;top:284.60px;width:200px;text-align:right;font-size:12.60px;color:#1f1f33;transform:scaleX(1.000);transform-origin:100% 0;">0.00</div>
<div class="t" style="left:453.25px;top:284.60px;width:200px;text-align:right;font-size:12.60px;color:#1f1f33;transform:scaleX(1.000);transform-origin:100% 0;">0.00</div>
<div class="t" style="left:551.94px;top:284.60px;width:200px;text-align:right;font-size:12.60px;color:#1f1f33;transform:scaleX(1.000);transform-origin:100% 0;">0.00</div>
<div class="t" style="left:650.63px;top:284.60px;width:200px;text-align:right;font-size:12.60px;color:#1f1f33;transform:scaleX(1.000);transform-origin:100% 0;">0.00</div>
<div class="t" style="left:749.32px;top:284.60px;width:200px;text-align:right;font-size:12.60px;color:#1f1f33;transform:scaleX(1.000);transform-origin:100% 0;">0.00</div>
<div class="t" style="left:848.01px;top:284.60px;width:200px;text-align:right;font-size:12.60px;color:#1f1f33;transform:scaleX(1.000);transform-origin:100% 0;">0.00</div>
<div class="t" style="left:946.70px;top:284.60px;width:200px;text-align:right;font-size:12.60px;color:#1f1f33;transform:scaleX(1.000);transform-origin:100% 0;">0.00</div>
<div class="a" style="left:5.00px;top:302.36px;width:14.20px;height:21.46px;background:#5566ff;"></div>
<div class="a" style="left:19.20px;top:302.36px;width:1.60px;height:21.46px;background:#c4c7ee;"></div>
<div class="a" style="left:20.80px;top:302.36px;width:14.20px;height:21.46px;background:#919bff;"></div>
<div class="a" style="left:35.00px;top:302.36px;width:1.00px;height:21.46px;background:#d0d3e2;"></div>
<div class="a" style="left:36.00px;top:302.36px;width:14.60px;height:21.46px;background:#b8bdff;"></div>
<div class="a" style="left:50.60px;top:302.36px;width:1.20px;height:21.46px;background:#dcdcde;"></div>
<div class="a" style="left:51.80px;top:302.36px;width:111.20px;height:21.46px;background:#f7f8fa;"></div>
<div class="a" style="left:50.60px;top:322.82px;width:1124.20px;height:1.00px;background:#dcdde2;"></div>
<div class="a" style="left:163.10px;top:302.36px;width:1.00px;height:21.46px;background:#dcdde2;"></div>
<div class="a" style="left:261.79px;top:302.36px;width:1.00px;height:21.46px;background:#dcdde2;"></div>
<div class="a" style="left:360.48px;top:302.36px;width:1.00px;height:21.46px;background:#dcdde2;"></div>
<div class="a" style="left:459.17px;top:302.36px;width:1.00px;height:21.46px;background:#dcdde2;"></div>
<div class="a" style="left:557.86px;top:302.36px;width:1.00px;height:21.46px;background:#dcdde2;"></div>
<div class="a" style="left:656.55px;top:302.36px;width:1.00px;height:21.46px;background:#dcdde2;"></div>
<div class="a" style="left:755.24px;top:302.36px;width:1.00px;height:21.46px;background:#dcdde2;"></div>
<div class="a" style="left:853.93px;top:302.36px;width:1.00px;height:21.46px;background:#dcdde2;"></div>
<div class="a" style="left:952.62px;top:302.36px;width:1.00px;height:21.46px;background:#dcdde2;"></div>
<div class="a" style="left:1051.31px;top:302.36px;width:1.00px;height:21.46px;background:#dcdde2;"></div>
<div class="a" style="left:1150.00px;top:302.36px;width:1.00px;height:21.46px;background:#dcdde2;"></div>
<div class="t" style="left:69.10px;top:306.48px;font-size:11.80px;color:#1f1f33;transform:scaleX(0.930);transform-origin:0 0;">al</div>
<div class="t" style="left:58.49px;top:306.06px;width:200px;text-align:right;font-size:12.60px;color:#1f1f33;transform:scaleX(1.000);transform-origin:100% 0;">2.99</div>
<div class="t" style="left:157.18px;top:306.06px;width:200px;text-align:right;font-size:12.60px;color:#1f1f33;transform:scaleX(1.000);transform-origin:100% 0;">6.54</div>
<div class="t" style="left:255.87px;top:306.06px;width:200px;text-align:right;font-size:12.60px;color:#1f1f33;transform:scaleX(1.000);transform-origin:100% 0;">15.04</div>
<div class="t" style="left:354.56px;top:306.06px;width:200px;text-align:right;font-size:12.60px;color:#1f1f33;transform:scaleX(1.000);transform-origin:100% 0;">0.00</div>
<div class="t" style="left:453.25px;top:306.06px;width:200px;text-align:right;font-size:12.60px;color:#1f1f33;transform:scaleX(1.000);transform-origin:100% 0;">0.00</div>
<div class="t" style="left:551.94px;top:306.06px;width:200px;text-align:right;font-size:12.60px;color:#1f1f33;transform:scaleX(1.000);transform-origin:100% 0;">0.00</div>
<div class="t" style="left:650.63px;top:306.06px;width:200px;text-align:right;font-size:12.60px;color:#1f1f33;transform:scaleX(1.000);transform-origin:100% 0;">0.00</div>
<div class="t" style="left:749.32px;top:306.06px;width:200px;text-align:right;font-size:12.60px;color:#1f1f33;transform:scaleX(1.000);transform-origin:100% 0;">0.00</div>
<div class="t" style="left:848.01px;top:306.06px;width:200px;text-align:right;font-size:12.60px;color:#1f1f33;transform:scaleX(1.000);transform-origin:100% 0;">0.00</div>
<div class="t" style="left:946.70px;top:306.06px;width:200px;text-align:right;font-size:12.60px;color:#1f1f33;transform:scaleX(1.000);transform-origin:100% 0;">0.00</div>
<div class="a" style="left:5.00px;top:323.82px;width:14.20px;height:21.46px;background:#5566ff;"></div>
<div class="a" style="left:19.20px;top:323.82px;width:1.60px;height:21.46px;background:#c4c7ee;"></div>
<div class="a" style="left:20.80px;top:323.82px;width:14.20px;height:21.46px;background:#919bff;"></div>
<div class="a" style="left:35.00px;top:323.82px;width:1.00px;height:21.46px;background:#d0d3e2;"></div>
<div class="a" style="left:36.00px;top:323.82px;width:14.60px;height:21.46px;background:#b8bdff;"></div>
<div class="a" style="left:50.60px;top:323.82px;width:1.20px;height:21.46px;background:#dcdcde;"></div>
<div class="a" style="left:51.80px;top:323.82px;width:111.20px;height:21.46px;background:#f7f8fa;"></div>
<div class="a" style="left:50.60px;top:344.28px;width:1124.20px;height:1.00px;background:#dcdde2;"></div>
<div class="a" style="left:163.10px;top:323.82px;width:1.00px;height:21.46px;background:#dcdde2;"></div>
<div class="a" style="left:261.79px;top:323.82px;width:1.00px;height:21.46px;background:#dcdde2;"></div>
<div class="a" style="left:360.48px;top:323.82px;width:1.00px;height:21.46px;background:#dcdde2;"></div>
<div class="a" style="left:459.17px;top:323.82px;width:1.00px;height:21.46px;background:#dcdde2;"></div>
<div class="a" style="left:557.86px;top:323.82px;width:1.00px;height:21.46px;background:#dcdde2;"></div>
<div class="a" style="left:656.55px;top:323.82px;width:1.00px;height:21.46px;background:#dcdde2;"></div>
<div class="a" style="left:755.24px;top:323.82px;width:1.00px;height:21.46px;background:#dcdde2;"></div>
<div class="a" style="left:853.93px;top:323.82px;width:1.00px;height:21.46px;background:#dcdde2;"></div>
<div class="a" style="left:952.62px;top:323.82px;width:1.00px;height:21.46px;background:#dcdde2;"></div>
<div class="a" style="left:1051.31px;top:323.82px;width:1.00px;height:21.46px;background:#dcdde2;"></div>
<div class="a" style="left:1150.00px;top:323.82px;width:1.00px;height:21.46px;background:#dcdde2;"></div>
<div class="t" style="left:69.10px;top:327.94px;font-size:11.80px;color:#1f1f33;transform:scaleX(0.930);transform-origin:0 0;">p</div>
<div class="t" style="left:58.49px;top:327.52px;width:200px;text-align:right;font-size:12.60px;color:#1f1f33;transform:scaleX(1.000);transform-origin:100% 0;">0.00</div>
<div class="t" style="left:157.18px;top:327.52px;width:200px;text-align:right;font-size:12.60px;color:#1f1f33;transform:scaleX(1.000);transform-origin:100% 0;">0.00</div>
<div class="t" style="left:255.87px;top:327.52px;width:200px;text-align:right;font-size:12.60px;color:#1f1f33;transform:scaleX(1.000);transform-origin:100% 0;">0.00</div>
<div class="t" style="left:354.56px;top:327.52px;width:200px;text-align:right;font-size:12.60px;color:#1f1f33;transform:scaleX(1.000);transform-origin:100% 0;">0.00</div>
<div class="t" style="left:453.25px;top:327.52px;width:200px;text-align:right;font-size:12.60px;color:#1f1f33;transform:scaleX(1.000);transform-origin:100% 0;">0.00</div>
<div class="t" style="left:551.94px;top:327.52px;width:200px;text-align:right;font-size:12.60px;color:#1f1f33;transform:scaleX(1.000);transform-origin:100% 0;">0.00</div>
<div class="t" style="left:650.63px;top:327.52px;width:200px;text-align:right;font-size:12.60px;color:#1f1f33;transform:scaleX(1.000);transform-origin:100% 0;">0.00</div>
<div class="t" style="left:749.32px;top:327.52px;width:200px;text-align:right;font-size:12.60px;color:#1f1f33;transform:scaleX(1.000);transform-origin:100% 0;">0.00</div>
<div class="t" style="left:848.01px;top:327.52px;width:200px;text-align:right;font-size:12.60px;color:#1f1f33;transform:scaleX(1.000);transform-origin:100% 0;">0.00</div>
<div class="t" style="left:946.70px;top:327.52px;width:200px;text-align:right;font-size:12.60px;color:#1f1f33;transform:scaleX(1.000);transform-origin:100% 0;">0.00</div>
<div class="a" style="left:5.00px;top:345.28px;width:1169.80px;height:21.46px;background:#72fb5a;"></div>
<div class="a" style="left:5.00px;top:343.88px;width:1169.80px;height:1.40px;background:#e6e6ee;"></div>
<div class="a" style="left:19.50px;top:366.04px;width:1155.30px;height:0.70px;background:#e4f0ea;"></div>
<div class="t" style="left:23.30px;top:347.84px;font-size:13.30px;color:#1a1a1a;transform:scaleX(1.045);transform-origin:0 0;">Stockpile Inventories</div>
<div class="a" style="left:5.00px;top:366.74px;width:14.50px;height:21.46px;background:#72fb5a;"></div>
<div class="a" style="left:19.50px;top:366.74px;width:1.20px;height:21.46px;background:#dcdcde;"></div>
<div class="a" style="left:20.70px;top:366.74px;width:142.30px;height:21.46px;background:#f7f8fa;"></div>
<div class="a" style="left:19.50px;top:387.20px;width:1155.30px;height:1.00px;background:#dcdde2;"></div>
<div class="a" style="left:163.10px;top:366.74px;width:1.00px;height:21.46px;background:#dcdde2;"></div>
<div class="a" style="left:261.79px;top:366.74px;width:1.00px;height:21.46px;background:#dcdde2;"></div>
<div class="a" style="left:360.48px;top:366.74px;width:1.00px;height:21.46px;background:#dcdde2;"></div>
<div class="a" style="left:459.17px;top:366.74px;width:1.00px;height:21.46px;background:#dcdde2;"></div>
<div class="a" style="left:557.86px;top:366.74px;width:1.00px;height:21.46px;background:#dcdde2;"></div>
<div class="a" style="left:656.55px;top:366.74px;width:1.00px;height:21.46px;background:#dcdde2;"></div>
<div class="a" style="left:755.24px;top:366.74px;width:1.00px;height:21.46px;background:#dcdde2;"></div>
<div class="a" style="left:853.93px;top:366.74px;width:1.00px;height:21.46px;background:#dcdde2;"></div>
<div class="a" style="left:952.62px;top:366.74px;width:1.00px;height:21.46px;background:#dcdde2;"></div>
<div class="a" style="left:1051.31px;top:366.74px;width:1.00px;height:21.46px;background:#dcdde2;"></div>
<div class="a" style="left:1150.00px;top:366.74px;width:1.00px;height:21.46px;background:#dcdde2;"></div>
<div class="t" style="left:37.30px;top:370.86px;font-size:11.80px;color:#1f1f33;transform:scaleX(0.830);transform-origin:0 0;">ROM HG</div>
<div class="t" style="left:58.49px;top:370.44px;width:200px;text-align:right;font-size:12.60px;color:#1f1f33;transform:scaleX(1.000);transform-origin:100% 0;">0</div>
<div class="t" style="left:157.18px;top:370.44px;width:200px;text-align:right;font-size:12.60px;color:#1f1f33;transform:scaleX(1.000);transform-origin:100% 0;">0</div>
<div class="t" style="left:255.87px;top:370.44px;width:200px;text-align:right;font-size:12.60px;color:#1f1f33;transform:scaleX(1.000);transform-origin:100% 0;">0</div>
<div class="t" style="left:354.56px;top:370.44px;width:200px;text-align:right;font-size:12.60px;color:#1f1f33;transform:scaleX(1.000);transform-origin:100% 0;">0</div>
<div class="t" style="left:453.25px;top:370.44px;width:200px;text-align:right;font-size:12.60px;color:#1f1f33;transform:scaleX(1.000);transform-origin:100% 0;">0</div>
<div class="t" style="left:551.94px;top:370.44px;width:200px;text-align:right;font-size:12.60px;color:#1f1f33;transform:scaleX(1.000);transform-origin:100% 0;">0</div>
<div class="t" style="left:650.63px;top:370.44px;width:200px;text-align:right;font-size:12.60px;color:#1f1f33;transform:scaleX(1.000);transform-origin:100% 0;">0</div>
<div class="t" style="left:749.32px;top:370.44px;width:200px;text-align:right;font-size:12.60px;color:#1f1f33;transform:scaleX(1.000);transform-origin:100% 0;">0</div>
<div class="t" style="left:848.01px;top:370.44px;width:200px;text-align:right;font-size:12.60px;color:#1f1f33;transform:scaleX(1.000);transform-origin:100% 0;">0</div>
<div class="t" style="left:946.70px;top:370.44px;width:200px;text-align:right;font-size:12.60px;color:#1f1f33;transform:scaleX(1.000);transform-origin:100% 0;">0</div>
<div class="a" style="left:5.00px;top:388.20px;width:14.50px;height:21.46px;background:#72fb5a;"></div>
<div class="a" style="left:19.50px;top:388.20px;width:1.20px;height:21.46px;background:#dcdcde;"></div>
<div class="a" style="left:20.70px;top:388.20px;width:142.30px;height:21.46px;background:#f7f8fa;"></div>
<div class="a" style="left:19.50px;top:408.66px;width:1155.30px;height:1.00px;background:#dcdde2;"></div>
<div class="a" style="left:163.10px;top:388.20px;width:1.00px;height:21.46px;background:#dcdde2;"></div>
<div class="a" style="left:261.79px;top:388.20px;width:1.00px;height:21.46px;background:#dcdde2;"></div>
<div class="a" style="left:360.48px;top:388.20px;width:1.00px;height:21.46px;background:#dcdde2;"></div>
<div class="a" style="left:459.17px;top:388.20px;width:1.00px;height:21.46px;background:#dcdde2;"></div>
<div class="a" style="left:557.86px;top:388.20px;width:1.00px;height:21.46px;background:#dcdde2;"></div>
<div class="a" style="left:656.55px;top:388.20px;width:1.00px;height:21.46px;background:#dcdde2;"></div>
<div class="a" style="left:755.24px;top:388.20px;width:1.00px;height:21.46px;background:#dcdde2;"></div>
<div class="a" style="left:853.93px;top:388.20px;width:1.00px;height:21.46px;background:#dcdde2;"></div>
<div class="a" style="left:952.62px;top:388.20px;width:1.00px;height:21.46px;background:#dcdde2;"></div>
<div class="a" style="left:1051.31px;top:388.20px;width:1.00px;height:21.46px;background:#dcdde2;"></div>
<div class="a" style="left:1150.00px;top:388.20px;width:1.00px;height:21.46px;background:#dcdde2;"></div>
<div class="t" style="left:37.30px;top:392.32px;font-size:11.80px;color:#1f1f33;transform:scaleX(0.830);transform-origin:0 0;">ROM MG</div>
<div class="t" style="left:58.49px;top:391.90px;width:200px;text-align:right;font-size:12.60px;color:#1f1f33;transform:scaleX(1.000);transform-origin:100% 0;">0</div>
<div class="t" style="left:157.18px;top:391.90px;width:200px;text-align:right;font-size:12.60px;color:#1f1f33;transform:scaleX(1.000);transform-origin:100% 0;">0</div>
<div class="t" style="left:255.87px;top:391.90px;width:200px;text-align:right;font-size:12.60px;color:#1f1f33;transform:scaleX(1.000);transform-origin:100% 0;">0</div>
<div class="t" style="left:354.56px;top:391.90px;width:200px;text-align:right;font-size:12.60px;color:#1f1f33;transform:scaleX(1.000);transform-origin:100% 0;">0</div>
<div class="t" style="left:453.25px;top:391.90px;width:200px;text-align:right;font-size:12.60px;color:#1f1f33;transform:scaleX(1.000);transform-origin:100% 0;">0</div>
<div class="t" style="left:551.94px;top:391.90px;width:200px;text-align:right;font-size:12.60px;color:#1f1f33;transform:scaleX(1.000);transform-origin:100% 0;">0</div>
<div class="t" style="left:650.63px;top:391.90px;width:200px;text-align:right;font-size:12.60px;color:#1f1f33;transform:scaleX(1.000);transform-origin:100% 0;">0</div>
<div class="t" style="left:749.32px;top:391.90px;width:200px;text-align:right;font-size:12.60px;color:#1f1f33;transform:scaleX(1.000);transform-origin:100% 0;">0</div>
<div class="t" style="left:848.01px;top:391.90px;width:200px;text-align:right;font-size:12.60px;color:#1f1f33;transform:scaleX(1.000);transform-origin:100% 0;">0</div>
<div class="t" style="left:946.70px;top:391.90px;width:200px;text-align:right;font-size:12.60px;color:#1f1f33;transform:scaleX(1.000);transform-origin:100% 0;">0</div>
<div class="a" style="left:5.00px;top:409.66px;width:14.50px;height:21.46px;background:#72fb5a;"></div>
<div class="a" style="left:19.50px;top:409.66px;width:1.20px;height:21.46px;background:#dcdcde;"></div>
<div class="a" style="left:20.70px;top:409.66px;width:142.30px;height:21.46px;background:#f7f8fa;"></div>
<div class="a" style="left:19.50px;top:430.12px;width:1155.30px;height:1.00px;background:#dcdde2;"></div>
<div class="a" style="left:163.10px;top:409.66px;width:1.00px;height:21.46px;background:#dcdde2;"></div>
<div class="a" style="left:261.79px;top:409.66px;width:1.00px;height:21.46px;background:#dcdde2;"></div>
<div class="a" style="left:360.48px;top:409.66px;width:1.00px;height:21.46px;background:#dcdde2;"></div>
<div class="a" style="left:459.17px;top:409.66px;width:1.00px;height:21.46px;background:#dcdde2;"></div>
<div class="a" style="left:557.86px;top:409.66px;width:1.00px;height:21.46px;background:#dcdde2;"></div>
<div class="a" style="left:656.55px;top:409.66px;width:1.00px;height:21.46px;background:#dcdde2;"></div>
<div class="a" style="left:755.24px;top:409.66px;width:1.00px;height:21.46px;background:#dcdde2;"></div>
<div class="a" style="left:853.93px;top:409.66px;width:1.00px;height:21.46px;background:#dcdde2;"></div>
<div class="a" style="left:952.62px;top:409.66px;width:1.00px;height:21.46px;background:#dcdde2;"></div>
<div class="a" style="left:1051.31px;top:409.66px;width:1.00px;height:21.46px;background:#dcdde2;"></div>
<div class="a" style="left:1150.00px;top:409.66px;width:1.00px;height:21.46px;background:#dcdde2;"></div>
<div class="t" style="left:37.30px;top:413.78px;font-size:11.80px;color:#1f1f33;transform:scaleX(0.800);transform-origin:0 0;">LG</div>
<div class="t" style="left:58.49px;top:413.36px;width:200px;text-align:right;font-size:12.60px;color:#1f1f33;transform:scaleX(1.000);transform-origin:100% 0;">30,720</div>
<div class="t" style="left:157.18px;top:413.36px;width:200px;text-align:right;font-size:12.60px;color:#1f1f33;transform:scaleX(1.000);transform-origin:100% 0;">30,720</div>
<div class="t" style="left:255.87px;top:413.36px;width:200px;text-align:right;font-size:12.60px;color:#1f1f33;transform:scaleX(1.000);transform-origin:100% 0;">30,720</div>
<div class="t" style="left:354.56px;top:413.36px;width:200px;text-align:right;font-size:12.60px;color:#1f1f33;transform:scaleX(1.000);transform-origin:100% 0;">30,720</div>
<div class="t" style="left:453.25px;top:413.36px;width:200px;text-align:right;font-size:12.60px;color:#1f1f33;transform:scaleX(1.000);transform-origin:100% 0;">30,720</div>
<div class="t" style="left:551.94px;top:413.36px;width:200px;text-align:right;font-size:12.60px;color:#1f1f33;transform:scaleX(1.000);transform-origin:100% 0;">30,720</div>
<div class="t" style="left:650.63px;top:413.36px;width:200px;text-align:right;font-size:12.60px;color:#1f1f33;transform:scaleX(1.000);transform-origin:100% 0;">30,720</div>
<div class="t" style="left:749.32px;top:413.36px;width:200px;text-align:right;font-size:12.60px;color:#1f1f33;transform:scaleX(1.000);transform-origin:100% 0;">30,720</div>
<div class="t" style="left:848.01px;top:413.36px;width:200px;text-align:right;font-size:12.60px;color:#1f1f33;transform:scaleX(1.000);transform-origin:100% 0;">30,720</div>
<div class="t" style="left:946.70px;top:413.36px;width:200px;text-align:right;font-size:12.60px;color:#1f1f33;transform:scaleX(1.000);transform-origin:100% 0;">30,720</div>
<div class="a" style="left:5.00px;top:431.12px;width:1169.80px;height:21.46px;background:#ff5580;"></div>
<div class="a" style="left:5.00px;top:429.72px;width:1169.80px;height:1.40px;background:#e6e6ee;"></div>
<div class="a" style="left:19.50px;top:451.88px;width:1155.30px;height:0.70px;background:#e4f4f4;"></div>
<div class="t" style="left:23.30px;top:433.68px;font-size:13.30px;color:#1a1a1a;transform:scaleX(0.985);transform-origin:0 0;">Trucks</div>
<div class="a" style="left:5.00px;top:452.58px;width:14.50px;height:21.46px;background:#ff5580;"></div>
<div class="a" style="left:19.50px;top:452.58px;width:1.20px;height:21.46px;background:#dcdcde;"></div>
<div class="a" style="left:20.70px;top:452.58px;width:142.30px;height:21.46px;background:#f7f8fa;"></div>
<div class="a" style="left:19.50px;top:473.04px;width:1155.30px;height:1.00px;background:#dcdde2;"></div>
<div class="a" style="left:163.10px;top:452.58px;width:1.00px;height:21.46px;background:#dcdde2;"></div>
<div class="a" style="left:261.79px;top:452.58px;width:1.00px;height:21.46px;background:#dcdde2;"></div>
<div class="a" style="left:360.48px;top:452.58px;width:1.00px;height:21.46px;background:#dcdde2;"></div>
<div class="a" style="left:459.17px;top:452.58px;width:1.00px;height:21.46px;background:#dcdde2;"></div>
<div class="a" style="left:557.86px;top:452.58px;width:1.00px;height:21.46px;background:#dcdde2;"></div>
<div class="a" style="left:656.55px;top:452.58px;width:1.00px;height:21.46px;background:#dcdde2;"></div>
<div class="a" style="left:755.24px;top:452.58px;width:1.00px;height:21.46px;background:#dcdde2;"></div>
<div class="a" style="left:853.93px;top:452.58px;width:1.00px;height:21.46px;background:#dcdde2;"></div>
<div class="a" style="left:952.62px;top:452.58px;width:1.00px;height:21.46px;background:#dcdde2;"></div>
<div class="a" style="left:1051.31px;top:452.58px;width:1.00px;height:21.46px;background:#dcdde2;"></div>
<div class="a" style="left:1150.00px;top:452.58px;width:1.00px;height:21.46px;background:#dcdde2;"></div>
<div class="a" style="left:242.59px;top:458.30px;width:4.50px;height:1.60px;background:#55556c;border-radius:0.8px"></div>
<div class="a" style="left:253.49px;top:458.30px;width:4.40px;height:1.60px;background:#55556c;border-radius:0.8px"></div>
<div class="a" style="left:341.28px;top:458.30px;width:4.50px;height:1.60px;background:#55556c;border-radius:0.8px"></div>
<div class="a" style="left:352.18px;top:458.30px;width:4.40px;height:1.60px;background:#55556c;border-radius:0.8px"></div>
<div class="a" style="left:439.97px;top:458.30px;width:4.50px;height:1.60px;background:#55556c;border-radius:0.8px"></div>
<div class="a" style="left:450.87px;top:458.30px;width:4.40px;height:1.60px;background:#55556c;border-radius:0.8px"></div>
<div class="a" style="left:538.66px;top:458.30px;width:4.50px;height:1.60px;background:#55556c;border-radius:0.8px"></div>
<div class="a" style="left:549.56px;top:458.30px;width:4.40px;height:1.60px;background:#55556c;border-radius:0.8px"></div>
<div class="a" style="left:637.35px;top:458.30px;width:4.50px;height:1.60px;background:#55556c;border-radius:0.8px"></div>
<div class="a" style="left:648.25px;top:458.30px;width:4.40px;height:1.60px;background:#55556c;border-radius:0.8px"></div>
<div class="a" style="left:736.04px;top:458.30px;width:4.50px;height:1.60px;background:#55556c;border-radius:0.8px"></div>
<div class="a" style="left:746.94px;top:458.30px;width:4.40px;height:1.60px;background:#55556c;border-radius:0.8px"></div>
<div class="a" style="left:834.73px;top:458.30px;width:4.50px;height:1.60px;background:#55556c;border-radius:0.8px"></div>
<div class="a" style="left:845.63px;top:458.30px;width:4.40px;height:1.60px;background:#55556c;border-radius:0.8px"></div>
<div class="a" style="left:933.42px;top:458.30px;width:4.50px;height:1.60px;background:#55556c;border-radius:0.8px"></div>
<div class="a" style="left:944.32px;top:458.30px;width:4.40px;height:1.60px;background:#55556c;border-radius:0.8px"></div>
<div class="a" style="left:1032.11px;top:458.30px;width:4.50px;height:1.60px;background:#55556c;border-radius:0.8px"></div>
<div class="a" style="left:1043.01px;top:458.30px;width:4.40px;height:1.60px;background:#55556c;border-radius:0.8px"></div>
<div class="a" style="left:1130.80px;top:458.30px;width:4.50px;height:1.60px;background:#55556c;border-radius:0.8px"></div>
<div class="a" style="left:1141.70px;top:458.30px;width:4.40px;height:1.60px;background:#55556c;border-radius:0.8px"></div>
</div></div>
<div class="a" style="left:5.00px;top:459.60px;width:1169.80px;height:16.00px;background:#f1f2f5;"></div>
<div class="a" style="left:1174.80px;top:26.00px;width:16.60px;height:433.60px;background:#f1f2f5;"></div>
<div class="a" style="left:1174.80px;top:26.00px;width:1.30px;height:433.60px;background:#f9f9fb;"></div>
<svg class="a" style="left:1180px;top:31px" width="8" height="4" viewBox="0 0 8 4"><path d="M0 4h7.5l-3.75-3.75z" fill="#6e727d"/></svg>
<svg class="a" style="left:1180px;top:450px" width="8" height="4" viewBox="0 0 8 4"><path d="M0 0h7.5l-3.75 3.6z" fill="#6e727d"/></svg>
<div class="a" style="left:1179.9px;top:219.3px;width:7.2px;height:88px;border:1.2px solid #aaadb6;border-radius:3.6px;background:linear-gradient(90deg,#d9dbe1,#eceef1 50%,#d9dbe1)"></div>
<div class="a" style="left:1175.80px;top:459.60px;width:15.60px;height:15.40px;background:#e8e9ed;"></div>
<svg class="a" style="left:10px;top:464.5px" width="4" height="7" viewBox="0 0 4 7"><path d="M4 0v6.5l-4-3.25z" fill="#6e727d"/></svg>
<svg class="a" style="left:1166px;top:464.5px" width="4" height="7" viewBox="0 0 4 7"><path d="M0 0v6.5l4-3.25z" fill="#6e727d"/></svg>
<div class="a" style="left:20.5px;top:464.2px;width:253px;height:6.8px;border:1.4px solid #abaeb7;border-radius:3.4px;background:linear-gradient(#e4e6ea,#d8dadf)"></div>
</body></html>
